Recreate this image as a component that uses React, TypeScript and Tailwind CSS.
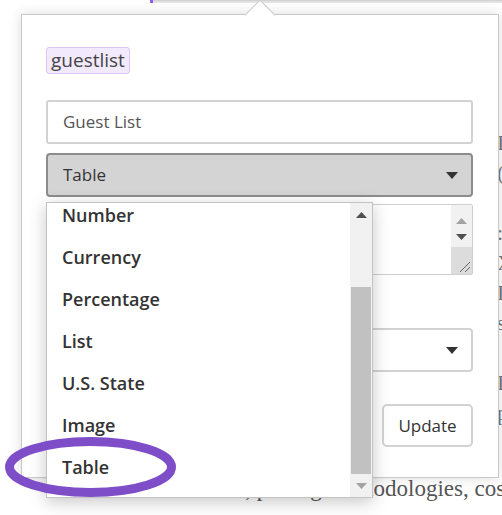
import React from 'react';

const items = ['Number', 'Currency', 'Percentage', 'List', 'U.S. State', 'Image', 'Table'];

const sideLines = ['', 'Im', '(', '', ':', 'X', 'I', 's', '', 'I', 'p'];

const Caret = ({ className = '' }: { className?: string }) => (
  <svg width="12" height="7" viewBox="0 0 12 7" className={className}>
    <polygon points="0,0 12,0 6,7" fill="#333" />
  </svg>
);

const Arrow = ({ up, color }: { up?: boolean; color: string }) => (
  <svg width="11" height="6" viewBox="0 0 11 6">
    <polygon points={up ? '0,6 11,6 5.5,0' : '0,0 11,0 5.5,6'} fill={color} />
  </svg>
);

const TypeDropdown = () => (
  <div className="absolute left-[24px] top-[187px] flex h-[296px] w-[327px] overflow-hidden border border-[#c4c4c4] bg-white shadow-[0_4px_16px_rgba(0,0,0,0.22)]">
    <div className="-mt-[9px] flex-1">
      {items.map((item) => (
        <div key={item} className="flex h-[42px] items-center pl-[15px] text-[18px] font-semibold text-[#333]">
          {item}
        </div>
      ))}
    </div>
    <div className="flex w-[22px] flex-col bg-[#f1f1f1]">
      <div className="flex h-[24px] items-center justify-center">
        <Arrow up color="#505050" />
      </div>
      <div className="h-[60px]" />
      <div className="mx-[1px] h-[187px] bg-[#c1c1c1]" />
      <div className="flex flex-1 items-center justify-center">
        <Arrow color="#a3a3a3" />
      </div>
    </div>
  </div>
);

const Popover = () => (
  <div className="absolute left-[21px] top-[14px] h-[464px] w-[478px] border border-[#c9c9c9] bg-white pl-[24px] pr-[25px] pt-[32px] shadow-[0_0_12px_rgba(0,0,0,0.14)]">
    <div className="absolute left-[227px] top-[-11px] h-[22px] w-[22px] rotate-45 border-l border-t border-[#c9c9c9] bg-white" />

    <div className="relative inline-flex h-[27px] items-center rounded-[3px] border border-[#d9c7f3] bg-[#f2eafc] px-[4px] text-[19px] text-[#444]">
      guestlist
    </div>

    <div className="mt-[26px] flex h-[44px] items-center rounded-[3px] border-2 border-[#d2d2d2] px-[15px] text-[17px] text-[#555]">
      Guest List
    </div>

    <div className="mt-[9px] flex h-[44px] items-center justify-between rounded-[4px] border-2 border-[#8c8c8c] bg-[#d4d4d4] pl-[15px] pr-[13px] text-[17px] text-[#333]">
      <span>Table</span>
      <Caret />
    </div>

    <div className="mt-[7px] flex h-[71px] justify-end rounded-[2px] border border-[#cfcfcf]">
      <div className="flex w-[21px] flex-col bg-[#f1f1f1]">
        <div className="flex h-[22px] items-end justify-center pb-[3px]">
          <Arrow up color="#a3a3a3" />
        </div>
        <div className="flex h-[20px] items-center justify-center">
          <Arrow color="#505050" />
        </div>
        <div className="flex flex-1 items-end justify-end bg-[#dcdcdc] p-[2px]">
          <svg width="12" height="12" viewBox="0 0 12 12">
            <path d="M12 2 L2 12 M12 7 L7 12" stroke="#666" strokeWidth="1" />
          </svg>
        </div>
      </div>
    </div>

    <div className="mt-[53px] flex h-[44px] items-center justify-end rounded-[4px] border-2 border-[#d2d2d2] pr-[13px]">
      <Caret />
    </div>

    <div className="mt-[32px] flex justify-end">
      <div className="flex h-[43px] w-[91px] items-center justify-center rounded-[5px] border-2 border-[#d2d2d2] text-[17px] text-[#333]">
        Update
      </div>
    </div>

    <TypeDropdown />
  </div>
);

export default function App() {
  return (
    <div className="relative h-[515px] w-[502px] overflow-hidden bg-white font-['Open_Sans',sans-serif]">
      <div className="flex h-full flex-col font-['Liberation_Serif',serif] text-[#555]">
        <div className="ml-[150px] h-[3px] border-l-[3px] border-[#8b5cf6] bg-gradient-to-b from-[#cfcfcf] to-[#ededed]" />
        <div className="flex-1 overflow-hidden whitespace-nowrap pl-[497px] pt-[95px] text-[22px] leading-[30px] text-[#777]">
          {sideLines.map((l, i) => (
            <div key={i} className="h-[30px]">{l}</div>
          ))}
        </div>
        <div className="h-[30px] whitespace-nowrap pl-[226px] text-[23px] leading-[30px]">es, pricing methodologies, cost</div>
        <div className="h-[11px]" />
      </div>

      <Popover />

      <svg className="absolute left-0 top-[430px]" width="185" height="75" viewBox="0 0 185 75">
        <ellipse cx="90.5" cy="37" rx="81" ry="25.5" fill="none" stroke="#7e4ec9" strokeWidth="9" />
      </svg>
    </div>
  );
}
